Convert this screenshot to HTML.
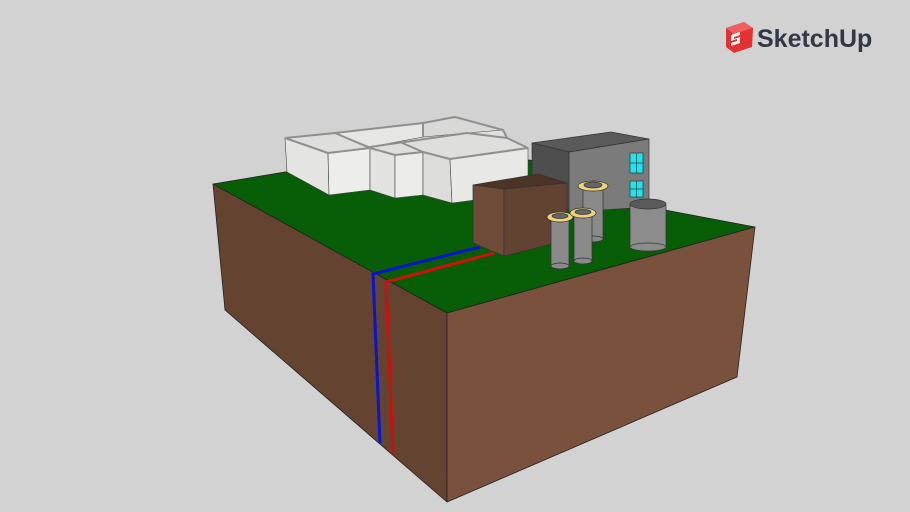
<!DOCTYPE html>
<html><head><meta charset="utf-8"><style>
html,body{margin:0;padding:0;background:#d2d2d2;width:910px;height:512px;overflow:hidden}
svg{position:absolute;left:0;top:0}
</style></head><body>
<svg width="910" height="512" viewBox="0 0 910 512">
<g stroke="#222" stroke-width="0.8" stroke-linejoin="round">
<polygon points="213,184 285,172 530,160 649,207 755,227 447,313" fill="#075e07"/>
<polygon points="213,184 447,313 447,502 225,310" fill="#654331"/>
<polygon points="447,313 755,227 737,377 447,502" fill="#7a513c"/>
</g>
<g fill="none" stroke-width="3">
<polyline points="480,247 373,274 380,443" stroke="#0a14c8"/>
<polyline points="494,253 386,282 393,453" stroke="#d01010"/>
</g>
<!-- house -->
<g stroke="#444" stroke-width="0.6" stroke-linejoin="round">
<polygon points="285,138 335,133 423,123 455,117 503,130 507,138 528,148 450,159 423,152 395,155 370,148 328,153" fill="#dededc"/>
<polygon points="335,133 423,123 423,137 370,147" fill="#e6e6e4"/>
<polygon points="423,123 455,117 503,130 467,133 423,137" fill="#d8d8d6"/>
<polygon points="285,138 328,153 329,195 287,172" fill="#e4e4e2"/>
<polygon points="328,153 370,148 370,190 329,195" fill="#ededeb"/>
<polygon points="370,148 395,155 395,198 370,190" fill="#e2e2e0"/>
<polygon points="395,155 423,152 423,195 395,198" fill="#ebebe9"/>
<polygon points="423,152 450,159 452,203 423,195" fill="#dcdcda"/>
<polygon points="450,159 528,148 528,193 452,203" fill="#e8e8e6"/>
</g>
<g fill="none" stroke="#8f8f8f" stroke-width="2" stroke-linejoin="round">
<polyline points="285,138 335,133 423,123 455,117 503,130 507,138 528,148"/>
<polyline points="285,138 328,153 370,148 395,155 423,152 450,159 528,148"/>
<polyline points="335,133 370,148"/>
<polyline points="370,147 467,133 507,138"/>
<polyline points="400,142 423,152"/>
<polyline points="423,123 423,137"/>
</g>
<g stroke="#333" stroke-width="0.7" stroke-linejoin="round">
<polygon points="532,143 611,132 649,139 569,152" fill="#5a5a5a"/>
<polygon points="532,143 569,152 569,210 532,200" fill="#4e4e4e"/>
<polygon points="569,152 649,139 649,207 569,212" fill="#7b7b7b"/>
<polygon points="473,185 538,174 567,183 504,189" fill="#4d3426"/>
<polygon points="473,185 504,189 504,256 473,243" fill="#6e4c39"/>
<polygon points="504,189 567,183 567,240 504,256" fill="#624331"/>
</g>
<g fill="#19e6f0" stroke="#333" stroke-width="0.7">
<rect x="630" y="153" width="13" height="20"/><line x1="636.5" y1="153" x2="636.5" y2="173"/><line x1="630" y1="163" x2="643" y2="163"/>
<rect x="630" y="181" width="13" height="16"/><line x1="636.5" y1="181" x2="636.5" y2="197"/><line x1="630" y1="189" x2="643" y2="189"/>
</g>
<g stroke="#333" stroke-width="0.7">
<rect x="583" y="187" width="20" height="52" fill="#8a8a8a"/><ellipse cx="593" cy="239" rx="10" ry="3" fill="#8a8a8a"/>
<ellipse cx="593" cy="186" rx="15" ry="5" fill="#efd27a"/><ellipse cx="593" cy="185" rx="9" ry="3" fill="#666"/>
<rect x="630" y="205" width="36" height="42" fill="#8c8c8c"/><ellipse cx="648" cy="247" rx="18" ry="4" fill="#8c8c8c"/>
<ellipse cx="648" cy="204" rx="18" ry="5" fill="#5a5a5a"/>
<rect x="551" y="219" width="18" height="47" fill="#8a8a8a"/><ellipse cx="560" cy="266" rx="9" ry="3" fill="#8a8a8a"/>
<ellipse cx="560" cy="217" rx="13" ry="5" fill="#efd27a"/><ellipse cx="560" cy="216" rx="8" ry="2.5" fill="#666"/>
<rect x="574" y="215" width="18" height="46" fill="#8a8a8a"/><ellipse cx="583" cy="261" rx="9" ry="3" fill="#8a8a8a"/>
<ellipse cx="583" cy="213" rx="13" ry="5" fill="#efd27a"/><ellipse cx="583" cy="212" rx="8" ry="2.5" fill="#666"/>
</g>
<g>
<polygon points="726,28 744,22 753,28 752,47 734,53 726,47" fill="#e23232"/>
<polygon points="726,28 744,22 753,28 734,34" fill="#f06060"/>
<path d="M731,35 l9,-3 l0,3 l-6,2 l0,2 l6,-2 l0,6 l-9,3 l0,-3 l6,-2 l0,-2 l-6,2z" fill="#fff"/>
</g>
<text x="757" y="47" font-family="Liberation Sans, sans-serif" font-weight="bold" font-size="25" fill="#333846">SketchUp</text>
</svg>
</body></html>
